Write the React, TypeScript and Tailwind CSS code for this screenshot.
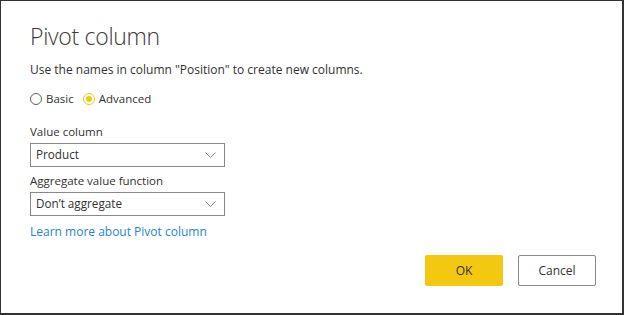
const font = { fontFamily: '"Open Sans", "Noto Sans", sans-serif' }

export default function App() {
    return (
        <div className="w-[624px] h-[315px] bg-white border-t border-l border-r-2 border-b-2 border-[#333] text-[#323130] flex flex-col" style={font}>
            <div className="pl-[29px] pr-[26px] pt-[20px] flex flex-col flex-1">
                {/* Header */}
                <h1 className="text-[23px] font-light leading-[30px] text-[#3b3a39] tracking-[-0.3px]">Pivot column</h1>
                <p className="text-[12px] leading-[18px] mt-[10px]">Use the names in column "Position" to create new columns.</p>

                {/* Mode */}
                <div className="flex items-center gap-[9px] mt-[11px] text-[11.5px] leading-[18px]">
                    <label className="flex items-center gap-[4px]">
                        <span className="w-[12px] h-[12px] rounded-full border border-[#605e5c]" />
                        <span>Basic</span>
                    </label>
                    <label className="flex items-center gap-[4px]">
                        <span className="w-[12px] h-[12px] rounded-full border border-[#f2c811] flex items-center justify-center">
                            <span className="w-[6px] h-[6px] rounded-full bg-[#f2c811]" />
                        </span>
                        <span>Advanced</span>
                    </label>
                </div>

                {/* Fields */}
                <Field label="Value column" value="Product" className="mt-[16px]" />
                <Field label="Aggregate value function" value="Don’t aggregate" className="mt-[6px]" />

                <a href="#" className="mt-[7px] text-[12px] leading-[18px] text-[#1d86d1] w-fit">Learn more about Pivot column</a>

                {/* Buttons */}
                <div className="flex justify-end gap-[15px] mt-auto mb-[27px]">
                    <button className="w-[78px] h-[31px] bg-[#f2c811] rounded-[2px] text-[12px] text-[#323130]">OK</button>
                    <button className="w-[78px] h-[31px] bg-white border border-[#8a8886] rounded-[2px] text-[12px] text-[#323130]">Cancel</button>
                </div>
            </div>
        </div>
    )
}

function Field({ label, value, className }: { label: string; value: string; className?: string }) {
    return (
        <div className={className}>
            <p className="text-[11.5px] leading-[16px] mb-[3px]">{label}</p>
            <div className="w-[195px] h-[24px] border border-[#8a8886] flex items-center justify-between pl-[5px] pr-[8px]">
                <span className="text-[11.7px]">{value}</span>
                <svg width="11" height="6" viewBox="0 0 11 6" fill="none" className="mr-[0px]">
                    <polyline points="0.5,0.5 5.5,5.5 10.5,0.5" stroke="#8a8886" strokeWidth="1" />
                </svg>
            </div>
        </div>
    )
}
